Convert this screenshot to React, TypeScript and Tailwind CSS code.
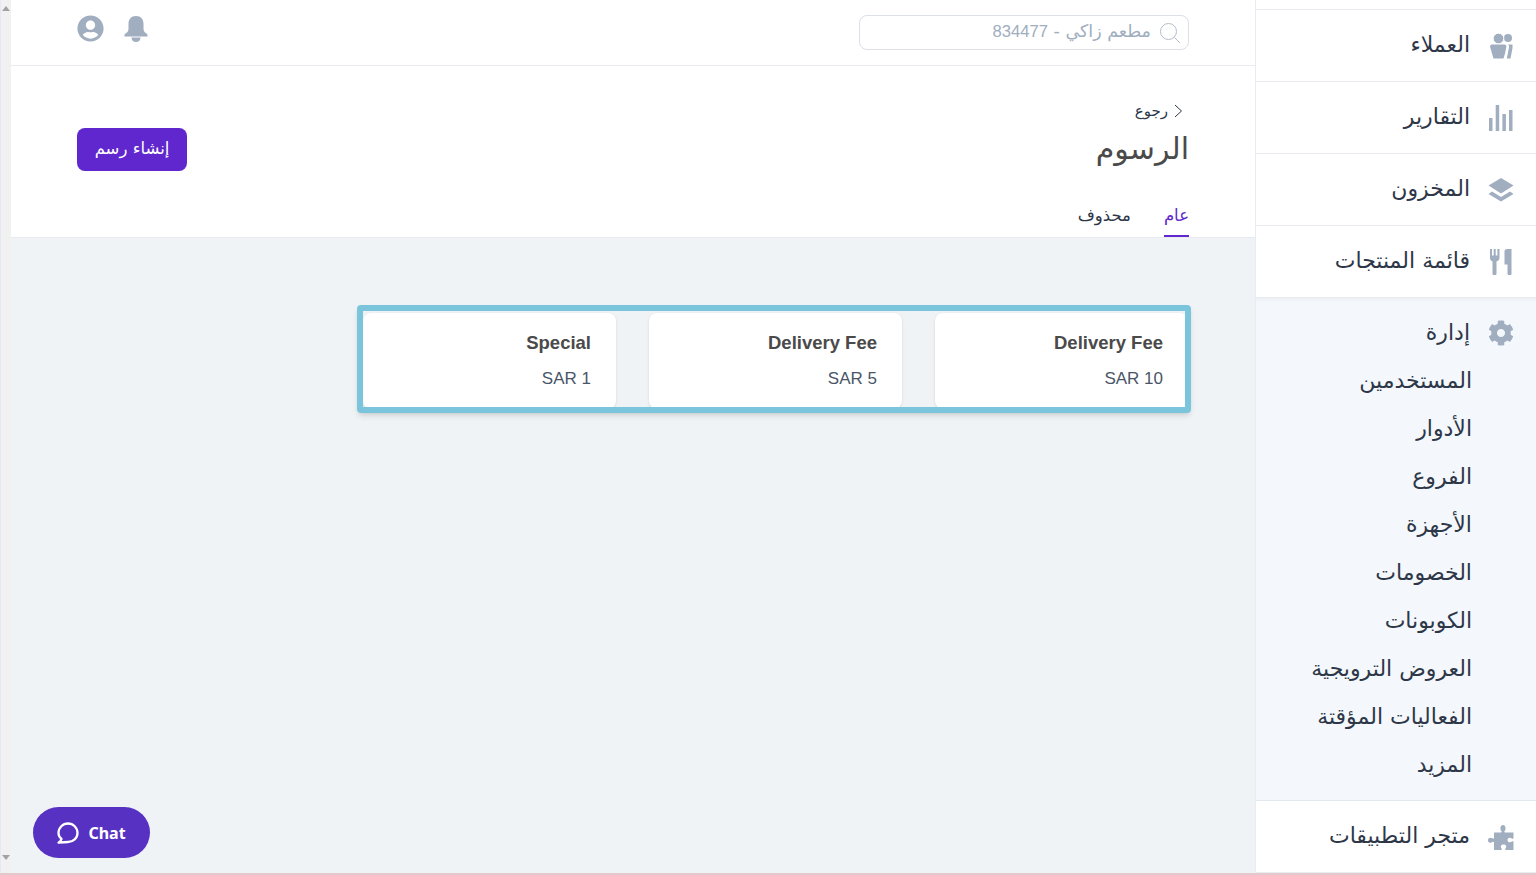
import { FaCog, FaUserCircle } from 'react-icons/fa';
import React from 'react';

const UsersIcon = () => (
  <svg viewBox="0 0 24 26" className="h-[26px] w-6 fill-[#a0aec0]">
    <circle cx="19" cy="5" r="4" />
    <circle cx="9.500" cy="5.500" r="5.300" stroke="#fff" strokeWidth="1" />
    <path d="M1 13.500C1 12 2.200 11.500 3.500 11.500H15.500C16.800 11.500 17.500 12.500 17.300 14L16 20.500 14.500 25.500H4.500L3 20.500Z" />
    <path d="M19 11.500H23.500V15L21.500 25.500H17.800L20 14.500C20.200 13.200 19.800 12.300 19 11.500Z" />
  </svg>
);

const BarsIcon = () => (
  <svg viewBox="0 0 24 26" className="h-[26px] w-6 fill-[#a0aec0]">
    <rect x="0" y="13" width="3.500" height="13" />
    <rect x="6.700" y="0" width="3.500" height="26" />
    <rect x="13.400" y="9" width="3.500" height="17" />
    <rect x="20" y="5" width="3.500" height="21" />
  </svg>
);

const LayersIcon = () => (
  <svg viewBox="0 0 26 24" className="h-[24px] w-[26px] fill-[#a0aec0]">
    <path d="M13 0L25.500 7.500 13 15.500 .5 7.500Z" />
    <path d="M4 13.500L13 19 22 13.500 25.500 16 13 23.500 .5 16Z" />
  </svg>
);

const UtensilsIcon = () => (
  <svg viewBox="0 0 24 26" className="h-[26px] w-6 fill-[#a0aec0]">
    <path d="M1 0H3V6.500H4.700V0H6.700V6.500H8.400V0H10.500V9C10.500 10.800 9 12 7.500 12.300V24.500C7.500 25.500 7 26 6 26H5C4 26 3.500 25.500 3.500 24.500V12.300C2 12 1 10.800 1 9Z" />
    <path d="M15.500 2C15.500 .8 17 0 18.500 0H22.500V24.500C22.500 25.500 22 26 21 26H20C19 26 18.500 25.500 18.500 24.500V15.500H15.500Z" />
  </svg>
);

const PuzzleIcon = () => (
  <svg viewBox="0 0 26 26" className="h-[26px] w-[26px] fill-[#a0aec0]">
    <path d="M10 8.500H13C13.800 8.500 13.800 7.500 13.200 6.800 12 5.500 12 1 15 1S18 5.500 16.800 6.800C16.200 7.500 16.200 8.500 17 8.500H25.500V14C25.500 15 24.500 15 23.800 14.400 22.500 13.200 19.500 13.300 19.500 16S22.500 18.800 23.800 17.600C24.500 17 25.500 17 25.500 18V26H18C17 26 17 25 17.600 24.200 18.700 22.800 18.300 20.500 15.500 20.500S12.300 22.800 13.400 24.200C14 25 14 26 13 26H6V18.500C6 17.500 5 17.500 4.300 18.100 3 19.200 0 19 0 16.200S3 13.200 4.300 14.300C5 14.900 6 14.900 6 14V8.500Z" />
  </svg>
);

const BellIcon = () => (
  <svg viewBox="0 0 24 26" className="h-[26px] w-6 fill-[#a0aec0]">
    <path d="M12 0C17 0 19.500 3.500 19.500 8V13C19.500 15.500 21.500 17 23.500 18.500V20.500H.5V18.500C2.500 17 4.500 15.500 4.500 13V8C4.500 3.500 7 0 12 0Z" />
    <path d="M7.500 21.500H16.500C16.500 24.500 14.500 26 12 26S7.500 24.500 7.500 21.500Z" />
  </svg>
);

const ChatIcon = () => (
  <svg viewBox="0 0 22 22" className="h-[22px] w-[22px] fill-none stroke-white stroke-[2.300]">
    <path d="M4.500 17C2.500 15.300 1.500 13.300 1.500 11 1.500 5.800 5.800 1.500 11 1.500S20.500 5.800 20.500 11 16.200 20 11 20C9 20 6 20.200 1.500 20.700 3 19.800 4.200 18.500 4.500 17Z" strokeLinejoin="round" />
  </svg>
);

const SearchIcon = () => (
  <svg viewBox="0 0 22 22" className="h-[22px] w-[22px] fill-none stroke-[#b4bcc8]">
    <circle cx="9.500" cy="9.500" r="8" />
    <path d="M15.500 15.500L21 21" />
  </svg>
);

const mainMenu = [
  { label: 'العملاء', icon: <UsersIcon /> },
  { label: 'التقارير', icon: <BarsIcon /> },
  { label: 'المخزون', icon: <LayersIcon /> },
  { label: 'قائمة المنتجات', icon: <UtensilsIcon /> },
];

const subMenu = ['المستخدمين', 'الأدوار', 'الفروع', 'الأجهزة', 'الخصومات', 'الكوبونات', 'العروض الترويجية', 'الفعاليات المؤقتة', 'المزيد'];

const fees = [
  { name: 'Delivery Fee', amount: 'SAR 10' },
  { name: 'Delivery Fee', amount: 'SAR 5' },
  { name: 'Special', amount: 'SAR 1' },
];

const MenuItem = ({ label, icon }: { label: string; icon: React.ReactNode }) => (
  <div className="flex h-[72px] items-center gap-[18px] border-b border-[#e8ebf0] bg-white pr-[22px]">
    <span className="flex w-[26px] justify-center">{icon}</span>
    <span className="-mt-[1px] text-[22px] leading-[30px] text-[#2d3748]">{label}</span>
  </div>
);

export default function App() {
  return (
    <div dir="rtl" className="relative flex h-[875px] w-[1536px] overflow-hidden bg-white font-['DejaVu_Sans',sans-serif]">
      {/* Sidebar */}
      <aside className="h-full w-[281px] shrink-0 border-l border-[#e8ebf0] bg-white">
        <div className="h-[10px] border-b border-[#e8ebf0]" />
        {mainMenu.map((item) => (
          <MenuItem key={item.label} label={item.label} icon={item.icon} />
        ))}
        <div className="h-[503px] border-b border-[#e2e8f0] bg-[#f4f8fc] pt-[11px] pr-[22px] shadow-[inset_0_4px_4px_-3px_rgba(0,0,0,0.06)]">
          <div className="flex h-[48px] items-center gap-[18px]">
            <FaCog className="h-[26px] w-[26px] text-[#a0aec0]" />
            <span className="text-[22px] leading-[30px] text-[#2d3748]">إدارة</span>
          </div>
          <ul className="pr-[42px]">
            {subMenu.map((label) => (
              <li key={label} className="flex h-[47.9px] items-center text-[22px] text-[#2d3748]">{label}</li>
            ))}
          </ul>
        </div>
        <MenuItem label="متجر التطبيقات" icon={<PuzzleIcon />} />
      </aside>

      {/* Main */}
      <main className="flex h-full min-w-0 flex-1 flex-col bg-[#eff3f6]">
        <header className="flex h-[66px] shrink-0 items-start justify-between border-b border-[#e8ebf0] bg-white px-[66px] pt-[15px]">
          <div className="flex h-[35px] w-[330px] items-center gap-[8px] rounded-lg border border-[#dcdfe8] px-[7px]">
            <SearchIcon />
            <span className="-mt-[3px] text-[17.5px] text-[#a0aec0]">مطعم زاكي - <span className="font-['Liberation_Sans',sans-serif] text-[16.6px]">834477</span></span>
          </div>
          <div className="flex items-center gap-[20px]">
            <BellIcon />
            <FaUserCircle className="h-[27px] w-[27px] text-[#a0aec0]" />
          </div>
        </header>

        <section className="relative h-[172px] shrink-0 border-b border-[#e8ebf0] bg-white px-[66px]">
          <div className="flex justify-between pt-[30px]">
            <div>
              <div className="flex h-[30px] items-center gap-[5px] pr-[6px] text-[15px] text-[#2d3748]">
                <svg viewBox="0 0 10 14" className="h-[14px] w-[10px] fill-none stroke-[#2d3748]"><path d="M2 1L8.500 7 2 13" /></svg>
                <span>رجوع</span>
              </div>
              <h1 className="text-[30px] leading-[46px] text-[#4a4a4a]">الرسوم</h1>
            </div>
            <button className="mt-[32px] h-[43px] w-[110px] rounded-lg bg-[#5f27cd] text-[16.500px] text-white">إنشاء رسم</button>
          </div>
          <div className="absolute right-[66px] bottom-0 flex items-end gap-[33px] text-[16.500px]">
            <span className="h-[33px] border-b-2 border-[#5f27cd] text-[#5f27cd]">عام</span>
            <span className="h-[33px] text-[#2d3748]">محذوف</span>
          </div>
        </section>

        <section className="flex-1 pt-[75px] pr-[67px] pl-[66px]">
          <div className="relative grid grid-cols-4 gap-[33px] font-['Liberation_Sans',sans-serif]">
            {fees.map((fee, index) => (
              <div key={index} className="h-[96px] rounded-lg bg-white pt-[17px] pr-[25px] pl-[26px] shadow-sm">
                <div className="text-[18.500px] leading-[26px] font-bold text-[#4a4a4a]">{fee.name}</div>
                <div dir="ltr" className="mt-[11px] text-right text-[17px] leading-[24px] text-[#4a5568]">{fee.amount}</div>
              </div>
            ))}
            <div className="pointer-events-none absolute top-[-8px] right-[-3px] h-[108px] w-[834px] rounded-sm border-[6px] border-[#7ac5dc] shadow-md" />
          </div>
        </section>
      </main>

      {/* Scrollbar */}
      <div className="flex h-full w-[11px] shrink-0 flex-col justify-between border-l border-[#e8e8f4] bg-[#f1f1f1] py-[6px]">
        <span className="mx-auto h-0 w-0 border-x-[4px] border-b-[5px] border-x-transparent border-b-[#a3a3a3]" />
        <span className="mx-auto mb-[9px] h-0 w-0 border-x-[4px] border-t-[5px] border-x-transparent border-t-[#a3a3a3]" />
      </div>

      {/* Chat launcher */}
      <button dir="ltr" className="absolute bottom-[17px] left-[33px] flex h-[51px] w-[117px] items-center justify-center gap-[9px] rounded-full bg-[#5631c2] font-['Noto_Sans',sans-serif] text-[16px] font-bold text-white">
        <ChatIcon />
        Chat
      </button>

      <div className="absolute right-0 bottom-0 left-0 h-[2px] bg-[#e3c8cc]" />
    </div>
  );
}
